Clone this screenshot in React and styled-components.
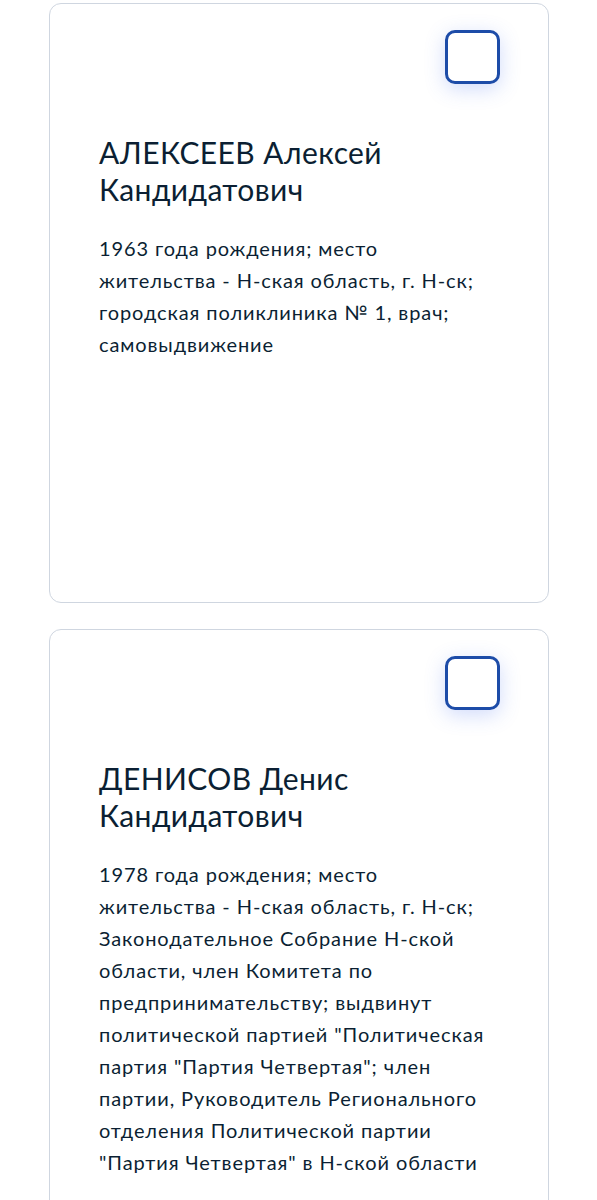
import React from "react";
import styled, { createGlobalStyle } from "styled-components";

const candidates = [
  {
    name: "АЛЕКСЕЕВ Алексей Кандидатович",
    info: "1963 года рождения; место жительства - Н-ская область, г. Н-ск; городская поликлиника № 1, врач; самовыдвижение",
  },
  {
    name: "ДЕНИСОВ Денис Кандидатович",
    info: '1978 года рождения; место жительства - Н-ская область, г. Н-ск; Законодательное Собрание Н-ской области, член Комитета по предпринимательству; выдвинут политической партией "Политическая партия "Партия Четвертая"; член партии, Руководитель Регионального отделения Политической партии "Партия Четвертая" в Н-ской области',
  },
];

export default function App() {
  return (
    <>
      <Global />
      <List>
        {candidates.map((c, i) => (
          <Card key={i}>
            <Top>
              <Checkbox type="button" aria-label="выбрать" />
            </Top>
            <Name>{c.name}</Name>
            <Info>{c.info}</Info>
          </Card>
        ))}
      </List>
    </>
  );
}

const Global = createGlobalStyle`
  body {
    margin: 0;
    background: #ffffff;
    font-family: Lato, "Noto Sans", sans-serif;
    color: #0b1f33;
  }
`;

const List = styled.div`
  display: flex;
  flex-direction: column;
  gap: 26px;
  padding: 3px 48px 40px 49px;
`;

const Card = styled.div`
  box-sizing: border-box;
  width: 500px;
  min-height: 600px;
  border: 1px solid #cfd6e0;
  border-radius: 12px;
  padding: 26px 48px 40px 49px;
  background: #fff;
`;

const Top = styled.div`
  display: flex;
  justify-content: flex-end;
  height: 54px;
`;

const Checkbox = styled.button`
  width: 55px;
  height: 54px;
  box-sizing: border-box;
  border: 3px solid #1d4ca8;
  border-radius: 10px;
  background: #fff;
  box-shadow: 0 5px 20px rgba(70, 110, 240, 0.25);
  padding: 0;
  margin: 0;
`;

const Name = styled.div`
  margin-top: 50px;
  width: 388px;
  font-size: 30px;
  line-height: 37px;
  letter-spacing: 0.4px;
  font-weight: 400;
  color: #0b1f33;
`;

const Info = styled.div`
  margin-top: 24px;
  width: 388px;
  font-size: 20px;
  line-height: 32px;
  letter-spacing: 0.9px;
  color: #0b1f33;
`;
